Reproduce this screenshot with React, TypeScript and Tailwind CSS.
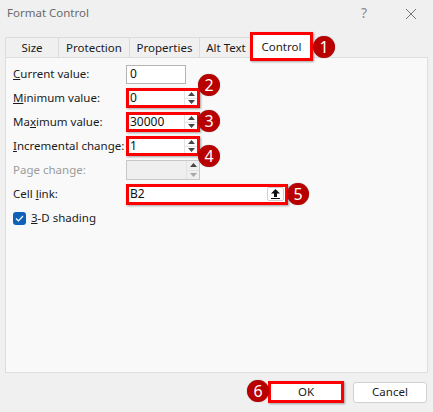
import React from "react";

// Format Control dialog — Control tab with numbered callouts

const FONT = { fontFamily: '"Noto Sans", "Liberation Sans", sans-serif' };

function Badge({ n, className }: { n: number; className: string }) {
  return (
    <div
      className={`absolute z-20 w-[22px] h-[22px] rounded-full bg-[#b80000] text-white text-[16px] leading-none flex items-center justify-center shadow-[0_0_1px_rgba(0,0,0,0.5)] ${className}`}
    >
      {n}
    </div>
  );
}

function Spinner({ disabled = false }: { disabled?: boolean }) {
  return (
    <div className="flex flex-col w-[13px] h-full border-l border-[#e3e3e3]">
      <div className="flex-1 flex items-center justify-center border-b border-[#e3e3e3]">
        <svg width="7" height="4" viewBox="0 0 7 4">
          <path d="M0 4 L3.5 0 L7 4 Z" fill="#444" />
        </svg>
      </div>
      <div className="flex-1 flex items-center justify-center">
        <svg width="7" height="4" viewBox="0 0 7 4">
          <path d="M0 0 L3.5 4 L7 0 Z" fill={disabled ? "#a8a8a8" : "#444"} />
        </svg>
      </div>
    </div>
  );
}

function SpinBox({ value, red = false, disabled = false }: { value: string; red?: boolean; disabled?: boolean }) {
  return (
    <div
      className={`flex w-[74px] h-[20px] ${
        red
          ? "border-[3px] border-[#ff0000] bg-white shadow-[1px_1px_2px_rgba(0,0,0,0.35)]"
          : disabled
          ? "border border-[#c8c8c8] bg-[#efefef]"
          : "border border-[#b4b4b4] bg-white"
      }`}
    >
      <div className={`flex-1 flex items-center text-[12px] text-[#111] ${red ? "pl-[1px]" : "pl-[3px]"}`}>{value}</div>
      <Spinner disabled={disabled} />
    </div>
  );
}

function Label({ children, gray = false }: { children: React.ReactNode; gray?: boolean }) {
  return (
    <div className={`w-[120px] pl-[7px] text-[11.5px] ${gray ? "text-[#9c9c9c]" : "text-[#1b1b1b]"}`}>{children}</div>
  );
}

export default function App() {
  const tabs = [
    { name: "Size", w: "w-[53px]" },
    { name: "Protection", w: "w-[71px]" },
    { name: "Properties", w: "w-[70px]" },
    { name: "Alt Text", w: "w-[53px]" },
  ];

  return (
    <div className="relative w-[433px] h-[412px] bg-[#f0f0f0] overflow-hidden" style={FONT}>
      {/* Title bar */}
      <div className="h-[33px] flex items-start pt-[4px] pl-[7px] pr-[16px]">
        <span className="text-[11.5px] text-[#6a6a6a] leading-[18px]">Format Control</span>
        <span className="ml-auto mr-[38px] text-[14px] text-[#8a8a8a] leading-[18px]">?</span>
        <svg width="12" height="12" viewBox="0 0 12 12" className="mt-[4px]">
          <path d="M1 1 L11 11 M11 1 L1 11" stroke="#777" strokeWidth="1" />
        </svg>
      </div>

      {/* Tabs */}
      <div className="relative flex items-end h-[24px] pl-[5px]">
        {tabs.map((t) => (
          <div
            key={t.name}
            className={`${t.w} h-[20px] flex items-center justify-center border-t border-l border-[#dcdcdc] text-[11.5px] text-[#1b1b1b]`}
          >
            {t.name}
          </div>
        ))}
        <div className="relative z-10 w-[63px] h-[29px] -ml-[2px] -mb-[4px] border-[3px] border-[#ff0000] bg-white shadow-[1px_1px_2px_rgba(0,0,0,0.35)] flex items-center justify-center text-[11.5px] text-[#1b1b1b]">
          Control
        </div>
      </div>
      <Badge n={1} className="left-[313px] top-[36px]" />

      {/* Panel */}
      <div className="relative mx-[5px] h-[316px] border border-[#dedede] bg-[#f9f9f9] pt-[4px]">
        <div className="flex items-center h-[24px]">
          <Label>
            <span className="underline">C</span>urrent value:
          </Label>
          <div className="w-[60px] h-[19px] border border-[#b4b4b4] bg-white flex items-center pl-[3px] text-[12px] text-[#111]">
            0
          </div>
        </div>
        <div className="flex items-center h-[24px]">
          <Label>
            <span className="underline">M</span>inimum value:
          </Label>
          <SpinBox value="0" red />
        </div>
        <div className="flex items-center h-[24px]">
          <Label>
            Ma<span className="underline">x</span>imum value:
          </Label>
          <SpinBox value="30000" red />
        </div>
        <div className="flex items-center h-[24px]">
          <Label>
            <span className="underline">I</span>ncremental change:
          </Label>
          <SpinBox value="1" red />
        </div>
        <div className="flex items-center h-[24px]">
          <Label gray>Page change:</Label>
          <SpinBox value="" disabled />
        </div>
        <div className="flex items-center h-[24px]">
          <Label>
            Cell <span className="underline">l</span>ink:
          </Label>
          <div className="flex items-center w-[162px] h-[21px] border-[3px] border-[#ff0000] bg-white shadow-[1px_1px_2px_rgba(0,0,0,0.35)]">
            <span className="flex-1 pl-[1px] text-[12px] text-[#111]">B2</span>
            <div className="w-[17px] h-[14px] mr-[1px] rounded-[2px] border border-[#d0d0d0] bg-white flex items-center justify-center">
              <svg width="9" height="10" viewBox="0 0 9 10">
                <path d="M4.5 0 L9 4.5 L6 4.5 L6 8 L3 8 L3 4.5 L0 4.5 Z" fill="#111" />
                <rect x="0" y="9" width="9" height="1" fill="#111" />
              </svg>
            </div>
          </div>
        </div>
        <div className="flex items-center h-[24px] pl-[7px] gap-[5px]">
          <div className="w-[13px] h-[13px] rounded-[3px] bg-[#0f62b8] flex items-center justify-center">
            <svg width="9" height="7" viewBox="0 0 9 7">
              <path d="M1 3.5 L3.5 6 L8 1" stroke="#fff" strokeWidth="1.2" fill="none" />
            </svg>
          </div>
          <span className="text-[11.5px] text-[#1b1b1b]">
            <span className="underline">3</span>-D shading
          </span>
        </div>

        <Badge n={2} className="left-[192px] top-[16px]" />
        <Badge n={3} className="left-[192px] top-[52px]" />
        <Badge n={4} className="left-[192px] top-[87px]" />
        <Badge n={5} className="left-[281px] top-[125px]" />
      </div>

      {/* Buttons */}
      <div className="flex items-center justify-end gap-[9px] pr-[6px] mt-[8px]">
        <div className="w-[76px] h-[22px] border-[3px] border-[#ff0000] bg-white shadow-[1px_1px_2px_rgba(0,0,0,0.35)] flex items-center justify-center text-[11.5px] text-[#1b1b1b]">
          OK
        </div>
        <div className="w-[74px] h-[21px] rounded-[3px] border border-[#d0d0d0] bg-white flex items-center justify-center text-[11.5px] text-[#1b1b1b]">
          Cancel
        </div>
      </div>
      <Badge n={6} className="left-[247px] top-[380px]" />
    </div>
  );
}
